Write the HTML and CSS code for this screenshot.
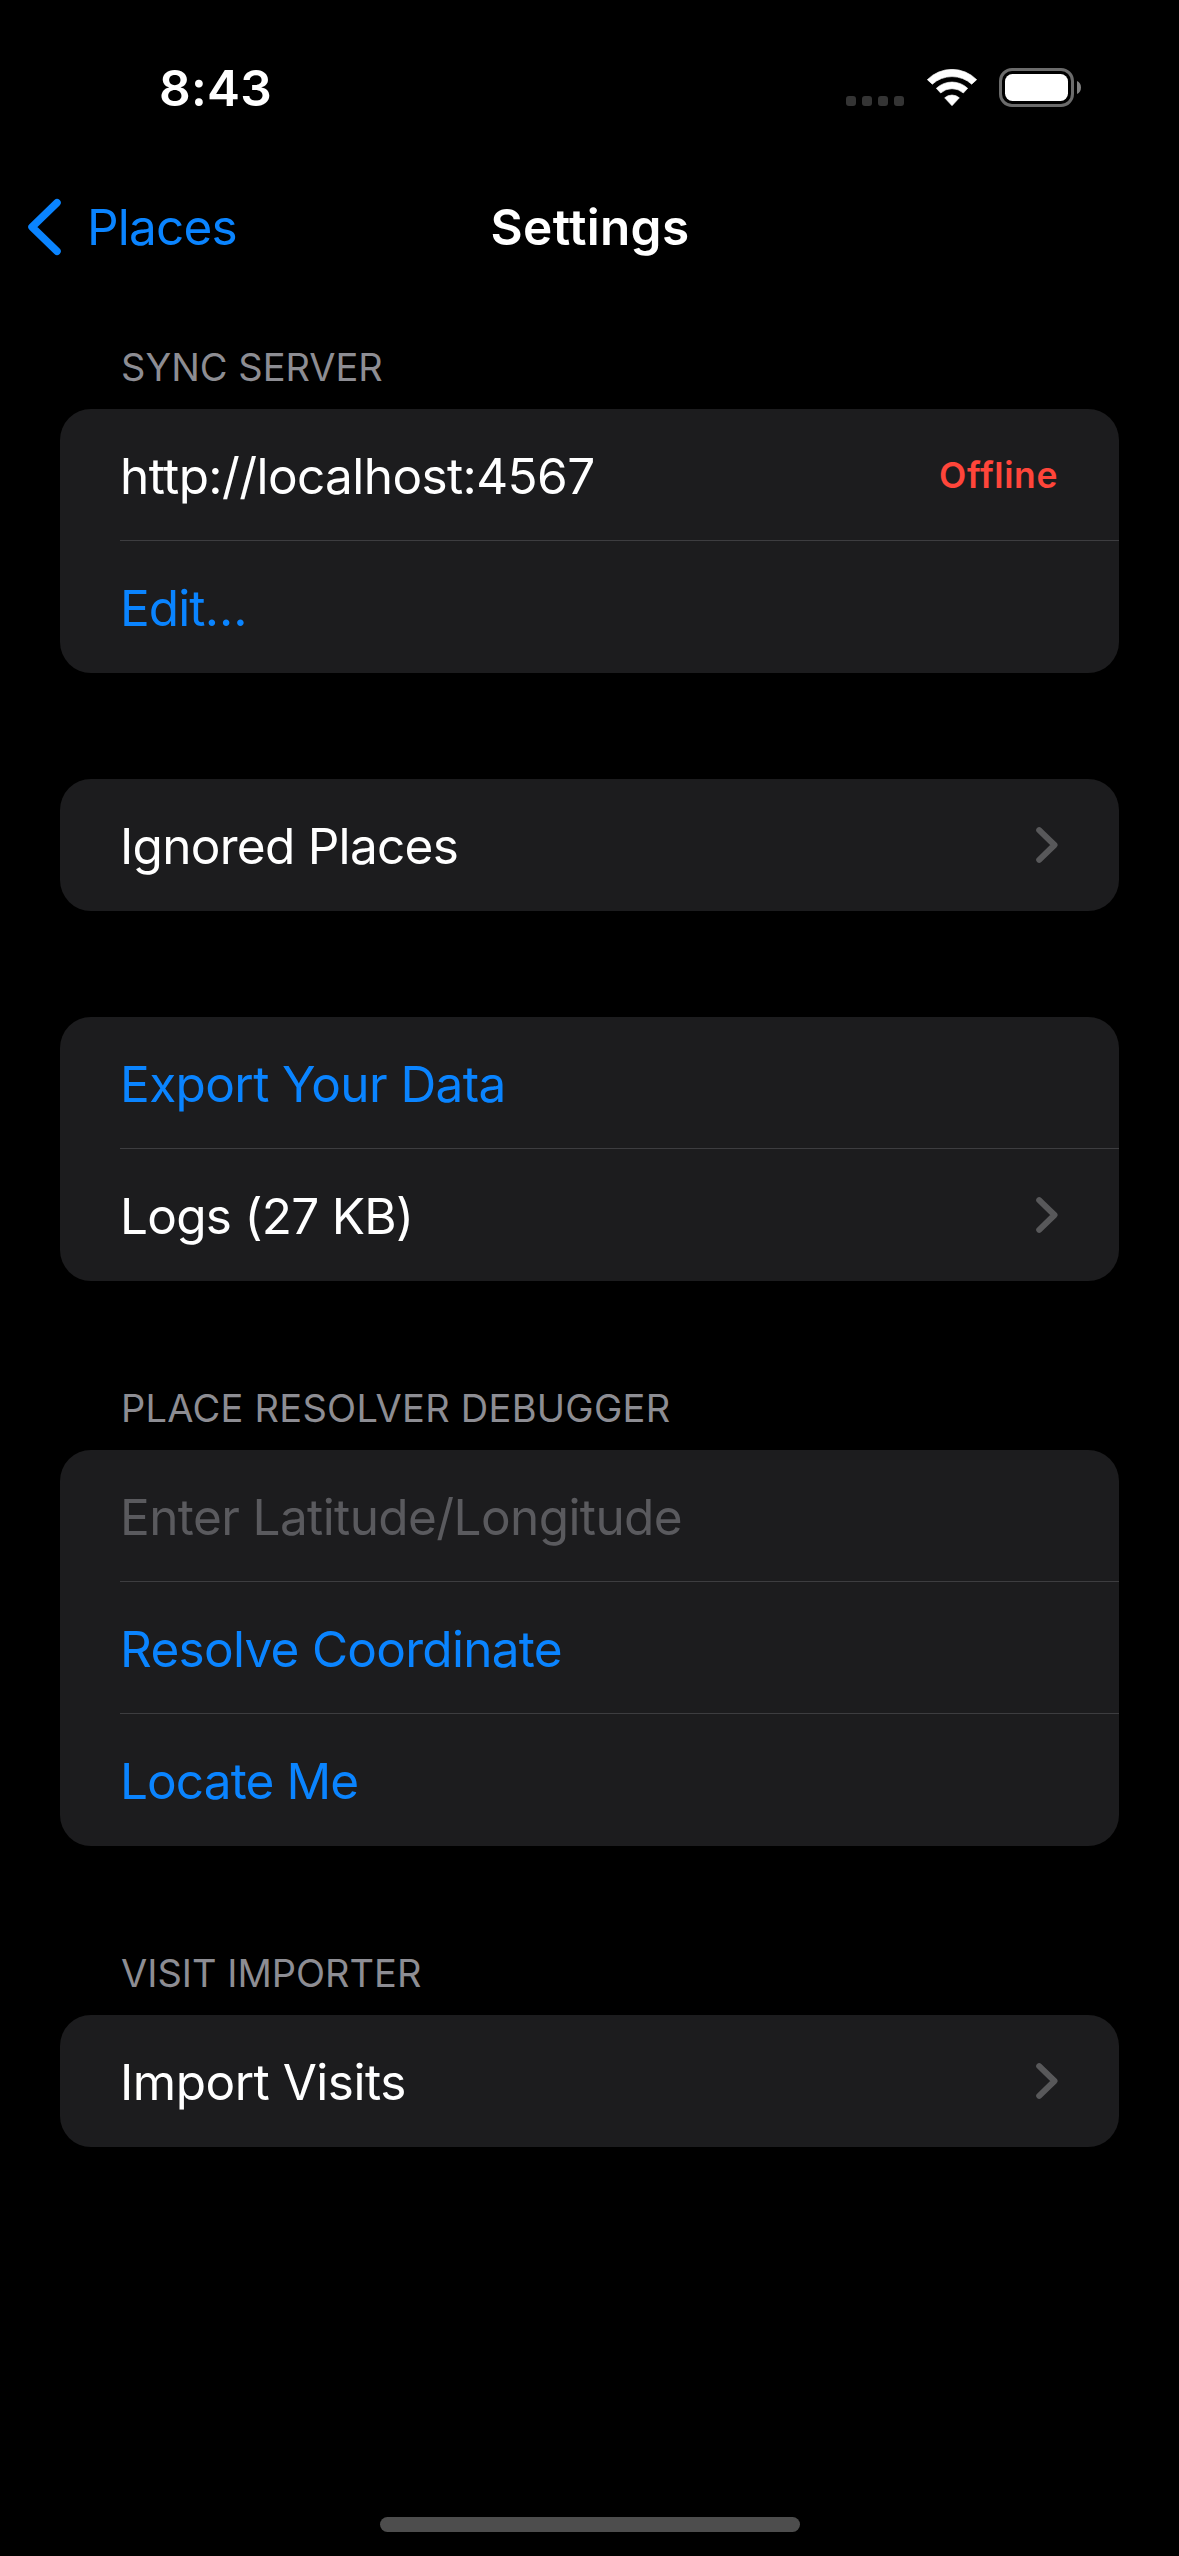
FILE: index.html
```html
<!DOCTYPE html>
<html lang="en">
<head>
<meta charset="utf-8">
<title>Settings</title>
<link rel="stylesheet" href="styles.css">
</head>
<body>
<div class="screen">
  <div class="status-bar">
    <span class="clock">8:43</span>
    <div class="status-icons">
      <svg class="cellular" width="58" height="10" viewBox="0 0 58 10" fill="#343434">
        <rect width="10" height="10" rx="3"/><rect x="16" width="10" height="10" rx="3"/><rect x="32" width="10" height="10" rx="3"/><rect x="48" width="10" height="10" rx="3"/>
      </svg>
      <svg class="wifi" width="50" height="37" viewBox="0 0 150 111" fill="#fff" stroke="#fff" stroke-width="2" stroke-linejoin="round">
        <path d="M1 32A104 104 0 0 1 149 32L134 45.500A88 88 0 0 0 16 45.500Z"/>
        <path d="M28 58A68 68 0 0 1 122 58L109 72A51 51 0 0 0 41 72Z"/>
        <path d="M53 86.500A33 33 0 0 1 97 86.500L75 110Z"/>
      </svg>
      <svg class="battery" width="83" height="39" viewBox="0 0 83 39">
        <rect x="1.500" y="1.500" width="72" height="36" rx="11.500" fill="none" stroke="#6b6b6b" stroke-width="3"/>
        <rect x="6" y="6" width="63" height="27" rx="7.500" fill="#fff"/>
        <path d="M78 13C80.500 14 82 16.500 82 19.500S80.500 25 78 26Z" fill="#808080"/>
      </svg>
    </div>
  </div>

  <header class="nav-bar">
    <a class="back">
      <svg width="35" height="58" viewBox="0 0 35 58" fill="none" stroke="#0a84ff" stroke-width="7.500" stroke-linecap="round" stroke-linejoin="round"><path d="M30 4.700L5 29L30 53.300"/></svg>
      <span class="back-label">Places</span>
    </a>
    <h1 class="title">Settings</h1>
  </header>

  <main class="list">
    <section class="section first">
      <h2 class="section-title">SYNC SERVER</h2>
      <div class="card">
        <div class="row"><span class="label">http://localhost:4567</span><span class="status">Offline</span></div>
        <div class="row action"><span class="label tighter">Edit…</span></div>
      </div>
    </section>

    <section class="section plain">
      <div class="card">
        <div class="row"><span class="label tight">Ignored Places</span><svg class="chevron" viewBox="0 0 22 36"><path d="M3.200 3.200L18.500 18L3.200 32.800"/></svg></div>
      </div>
    </section>

    <section class="section plain">
      <div class="card">
        <div class="row action"><span class="label">Export Your Data</span></div>
        <div class="row"><span class="label tight">Logs (27 KB)</span><svg class="chevron" viewBox="0 0 22 36"><path d="M3.200 3.200L18.500 18L3.200 32.800"/></svg></div>
      </div>
    </section>

    <section class="section">
      <h2 class="section-title wide">PLACE RESOLVER DEBUGGER</h2>
      <div class="card">
        <div class="row placeholder"><span class="label">Enter Latitude/Longitude</span></div>
        <div class="row action"><span class="label tight">Resolve Coordinate</span></div>
        <div class="row action"><span class="label tighter">Locate Me</span></div>
      </div>
    </section>

    <section class="section">
      <h2 class="section-title">VISIT IMPORTER</h2>
      <div class="card">
        <div class="row"><span class="label loose">Import Visits</span><svg class="chevron" viewBox="0 0 22 36"><path d="M3.200 3.200L18.500 18L3.200 32.800"/></svg></div>
      </div>
    </section>
  </main>

  <div class="home-indicator"></div>
</div>
</body>
</html>
```
FILE: styles.css
```css
* { box-sizing: border-box; }

body {
  margin: 0;
  background: #000;
  color: #fff;
  font-family: Inter, "Liberation Sans", sans-serif;
  font-size: 49.5px;
}

.screen {
  display: flex;
  flex-direction: column;
  width: 1179px;
  height: 2556px;
  overflow: hidden;
}

/* Status bar */
.status-bar {
  display: flex;
  justify-content: space-between;
  height: 132px;
  padding: 44px 97px 0 159px;
}
.clock {
  line-height: 88px;
  font-weight: 600;
  letter-spacing: 0.29px;
}
.status-icons {
  display: flex;
  align-items: flex-end;
  height: 63px;
}
.cellular { margin-bottom: 1px; }
.wifi { margin: 0 22px 1px 23px; }

/* Navigation bar */
.nav-bar {
  display: grid;
  grid-template-columns: 1fr auto 1fr;
  align-items: center;
  height: 190px;
  padding: 0 26px 0 27px;
}
.back {
  display: flex;
  align-items: center;
  color: #0a84ff;
}
.back-label {
  margin-left: 25px;
  letter-spacing: -0.8px;
}
.title {
  margin: 0;
  font-size: 49.5px;
  font-weight: 600;
  letter-spacing: 0.32px;
}

/* Grouped list */
.list {
  flex: 1;
  padding: 0 60px;
}
.section { margin-top: 82px; }
.section.first { margin-top: 0; }
.section.plain { margin-top: 106px; }
.section-title {
  display: flex;
  align-items: flex-end;
  height: 87px;
  margin: 0;
  padding: 0 60px 19px 61px;
  color: #8d8d93;
  font-size: 38px;
  font-weight: 400;
  line-height: 46px;
}
.section-title.wide { letter-spacing: 0.27px; }
.card {
  border-radius: 31px;
  background: #1c1c1e;
  overflow: hidden;
}
.row {
  display: flex;
  align-items: center;
  justify-content: space-between;
  height: 132px;
  margin-left: 60px;
  padding-right: 61px;
}
.row + .row { box-shadow: 0 -1px #3d3d40; }
.label {
  padding-top: 2px;
  letter-spacing: -0.6px;
}
.label.tight { letter-spacing: -0.72px; }
.label.tighter { letter-spacing: -0.9px; }
.label.loose { letter-spacing: -0.5px; }
.action { color: #0a84ff; }
.placeholder { color: #5a5a5e; }
.status {
  color: #ff453a;
  font-size: 35.5px;
  font-weight: 600;
  letter-spacing: 0.6px;
}
.chevron {
  width: 22px;
  height: 36px;
  fill: none;
  stroke: #58585a;
  stroke-width: 6px;
  stroke-linecap: round;
  stroke-linejoin: round;
}

.home-indicator {
  align-self: center;
  width: 420px;
  height: 15px;
  margin: 0 0 24px 1px;
  border-radius: 8px;
  background: #4d4d4d;
}
```
